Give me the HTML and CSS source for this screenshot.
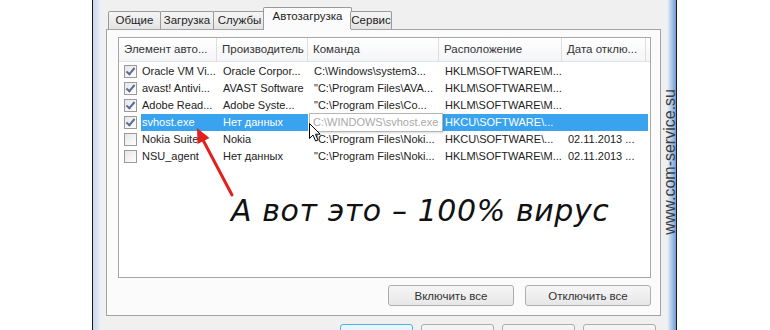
FILE: index.html
```html
<!DOCTYPE html>
<html lang="ru">
  <head>
    <meta charset="UTF-8" />
    <title>Автозагрузка</title>
    <link rel="stylesheet" href="styles.css">
  </head>
  <body>
    <div class="page">
      <div class="window">
        <div class="frame frame-left"></div>

        <div class="dialog">
          <div class="tabs">
            <div class="tab t-general">Общие</div>
            <div class="tab t-boot">Загрузка</div>
            <div class="tab t-services">Службы</div>
            <div class="tab t-startup active">Автозагрузка</div>
            <div class="tab t-tools">Сервис</div>
          </div>

          <div class="panel">
            <div class="list">
              <div class="list-head">
                <div class="hcol c1">Элемент авто...</div>
                <div class="hcol c2">Производитель</div>
                <div class="hcol c3">Команда</div>
                <div class="hcol c4">Расположение</div>
                <div class="hcol c5">Дата отклю...</div>
              </div>

              <div class="rows">
                <div class="row">
                  <div class="check-cell"><span class="check on"></span></div>
                  <div class="cells">
                    <div class="cell">Oracle VM Vi...</div>
                    <div class="cell">Oracle Corpor...</div>
                    <div class="cell">C:\Windows\system3...</div>
                    <div class="cell">HKLM\SOFTWARE\M...</div>
                    <div class="cell"></div>
                  </div>
                </div>
                <div class="row">
                  <div class="check-cell"><span class="check on"></span></div>
                  <div class="cells">
                    <div class="cell">avast! Antivi...</div>
                    <div class="cell">AVAST Software</div>
                    <div class="cell">"C:\Program Files\AVA...</div>
                    <div class="cell">HKLM\SOFTWARE\M...</div>
                    <div class="cell"></div>
                  </div>
                </div>
                <div class="row">
                  <div class="check-cell"><span class="check on"></span></div>
                  <div class="cells">
                    <div class="cell">Adobe Read...</div>
                    <div class="cell">Adobe Syste...</div>
                    <div class="cell">"C:\Program Files\Co...</div>
                    <div class="cell">HKLM\SOFTWARE\M...</div>
                    <div class="cell"></div>
                  </div>
                </div>
                <div class="row">
                  <div class="check-cell"><span class="check on"></span></div>
                  <div class="cells selected">
                    <div class="cell">svhost.exe</div>
                    <div class="cell">Нет данных</div>
                    <div class="cell tip-cell"><div class="tooltip">C:\WINDOWS\svhost.exe</div></div>
                    <div class="cell">HKCU\SOFTWARE\...</div>
                    <div class="cell"></div>
                  </div>
                </div>
                <div class="row">
                  <div class="check-cell"><span class="check"></span></div>
                  <div class="cells">
                    <div class="cell">Nokia Suite</div>
                    <div class="cell">Nokia</div>
                    <div class="cell">"C:\Program Files\Noki...</div>
                    <div class="cell">HKCU\SOFTWARE\...</div>
                    <div class="cell">02.11.2013 ...</div>
                  </div>
                </div>
                <div class="row">
                  <div class="check-cell"><span class="check"></span></div>
                  <div class="cells">
                    <div class="cell">NSU_agent</div>
                    <div class="cell">Нет данных</div>
                    <div class="cell">"C:\Program Files\Noki...</div>
                    <div class="cell">HKLM\SOFTWARE\M...</div>
                    <div class="cell">02.11.2013 ...</div>
                  </div>
                </div>
              </div>
            </div>

            <div class="actions">
              <button class="btn">Включить все</button>
              <button class="btn">Отключить все</button>
            </div>
          </div>

          <div class="dialog-buttons">
            <button class="btn default"></button>
            <button class="btn"></button>
            <button class="btn"></button>
            <button class="btn"></button>
          </div>
        </div>

        <div class="frame frame-right"></div>
      </div>

      <!-- пометки поверх скриншота -->
      <svg class="arrow" width="55" height="78" viewBox="0 0 55 78">
        <line x1="47" y1="73" x2="18" y2="18" stroke="#e3211c" stroke-width="3" stroke-linecap="round" />
        <polygon points="12,6 24.5,16 12.5,22" fill="#e3211c" />
      </svg>

      <svg class="cursor" width="13" height="20" viewBox="0 0 13 20">
        <path d="M0.5 0.5 L0.5 15.5 L4 12 L6.6 18 L9 17 L6.5 11.2 L11.2 11.2 Z" fill="#fff" stroke="#000" stroke-width="1" stroke-linejoin="round" />
      </svg>

      <div class="caption">А вот это – 100% вирус</div>
      <div class="watermark">www.com-service.su</div>
    </div>
  </body>
</html>
```

FILE: styles.css
```css
body {
  margin: 0;
  background-color: #ffffff;
  font-family: "Liberation Sans", Arial, sans-serif;
  font-size: 11px;
  color: #222222;
}

.page {
  position: relative;
  display: flex;
  width: 770px;
  height: 330px;
  overflow: hidden;
}

.window {
  margin-left: 92px;
  width: 585px;
  height: 330px;
  box-sizing: border-box;
  border-left: 1px solid #1a1a1a;
  border-right: 1px solid #1a1a1a;
  display: flex;
}

.frame-left {
  width: 7px;
  background: linear-gradient(to right, #c7d8ec, #e6eef7);
}

.frame-right {
  width: 9px;
  background: linear-gradient(to right, #eef3f9, #b9d0ea 40%, #6f9fd8);
}

.dialog {
  width: 567px;
  background-color: #f0f0f0;
  padding: 7px 6px 0 6px;
  box-sizing: border-box;
}

/* вкладки */
.tabs {
  display: flex;
  align-items: flex-end;
  height: 22px;
  padding-left: 2px;
  position: relative;
  z-index: 2;
}

.tab {
  height: 18px;
  box-sizing: border-box;
  text-align: center;
  line-height: 16px;
  border: 1px solid #9a9a9a;
  border-bottom: none;
  margin-right: -1px;
  background: linear-gradient(#f5f5f5, #e4e4e4);
  border-radius: 2px 2px 0 0;
  color: #1e1e1e;
  font-size: 11.5px;
  white-space: nowrap;
}

.t-general { width: 53px; }
.t-boot { width: 54px; }
.t-services { width: 53px; }
.t-startup { width: 89px; }
.t-tools { width: 42px; }

.tab.active {
  height: 23px;
  margin-bottom: -1px;
  line-height: 17px;
  background: #fbfbfb;
  margin-left: -2px;
  margin-right: -2px;
}

.panel {
  height: 287px;
  box-sizing: border-box;
  border: 1px solid #a3a3a3;
  background-color: #fbfbfb;
  padding: 7px 9px 0 11px;
  position: relative;
  z-index: 1;
}

/* список */
.list {
  height: 241px;
  box-sizing: border-box;
  border: 1px solid #a7a7a7;
  background-color: #ffffff;
}

.list-head {
  display: flex;
  height: 24px;
  box-sizing: border-box;
  border-bottom: 1px solid #e2e2e2;
  background: linear-gradient(#ffffff, #f4f5f7);
}

.hcol {
  box-sizing: border-box;
  padding-left: 5px;
  line-height: 22px;
  border-right: 1px solid #dedede;
  white-space: nowrap;
  overflow: hidden;
  font-size: 11.5px;
  color: #333333;
}

.c1 { width: 98px; }
.c2 { width: 91px; }
.c3 { width: 131px; }
.c4 { width: 123px; }
.c5 { width: 84px; }

.rows {
  padding-top: 1px;
}

.row {
  display: flex;
  height: 17px;
}

.check-cell {
  width: 22px;
  flex: none;
}

.check {
  display: block;
  width: 13px;
  height: 13px;
  box-sizing: border-box;
  margin: 2px 0 0 5px;
  border: 1px solid #9a9a9a;
  background: linear-gradient(135deg, #e6e6e6, #ffffff);
  position: relative;
}

.check.on::after {
  content: "";
  position: absolute;
  left: 3px;
  top: 0px;
  width: 3px;
  height: 7px;
  border-right: 2px solid #5a6e95;
  border-bottom: 2px solid #5a6e95;
  transform: rotate(40deg);
}

.cells {
  display: grid;
  grid-template-columns: 76px 91px 131px 123px 86px;
  width: 507px;
}

.cell {
  padding-left: 6px;
  line-height: 17px;
  white-space: nowrap;
  overflow: hidden;
}

.cells .cell:first-child {
  padding-left: 1px;
}

.selected {
  background-color: #39a3ef;
  color: #ffffff;
}

.tip-cell {
  background-color: #ffffff;
  overflow: visible;
  position: relative;
}

.tooltip {
  position: absolute;
  left: 1px;
  top: -1px;
  width: 134px;
  height: 19px;
  box-sizing: border-box;
  border: 1px solid #b5b5b5;
  background-color: #ffffff;
  color: #a9a9a9;
  padding-left: 3px;
  line-height: 17px;
  box-shadow: 1px 1px 2px rgba(0, 0, 0, 0.15);
  z-index: 1;
}

/* кнопки */
.actions {
  display: flex;
  justify-content: flex-end;
  gap: 11px;
  margin-top: 7px;
}

.btn {
  width: 126px;
  height: 21px;
  font-family: "Liberation Sans", Arial, sans-serif;
  font-size: 11.5px;
  color: #333333;
  border: 1px solid #adadad;
  border-radius: 3px;
  background: linear-gradient(#f6f6f6, #e7e7e7);
  padding: 0;
}

.dialog-buttons {
  display: flex;
  justify-content: flex-end;
  gap: 8px;
  margin-top: 8px;
  padding-right: 5px;
}

.dialog-buttons .btn {
  width: 73px;
}

.dialog-buttons .default {
  border-color: #4fb3df;
  background: linear-gradient(#eaf6fd, #d9f0fc);
}

/* пометки */
.arrow,
.cursor,
.caption,
.watermark {
  position: absolute;
  z-index: 10;
}

.arrow {
  left: 185px;
  top: 122px;
}

.cursor {
  left: 309px;
  top: 123px;
}

.caption {
  left: 231px;
  top: 194px;
  font-family: "DejaVu Sans", sans-serif;
  font-size: 30px;
  line-height: 34px;
  letter-spacing: 0.6px;
  font-style: italic;
  color: #111111;
}

.watermark {
  left: 661px;
  top: 89px;
  writing-mode: vertical-rl;
  transform: rotate(180deg);
  font-size: 16px;
  color: #3c3c3c;
}
```
